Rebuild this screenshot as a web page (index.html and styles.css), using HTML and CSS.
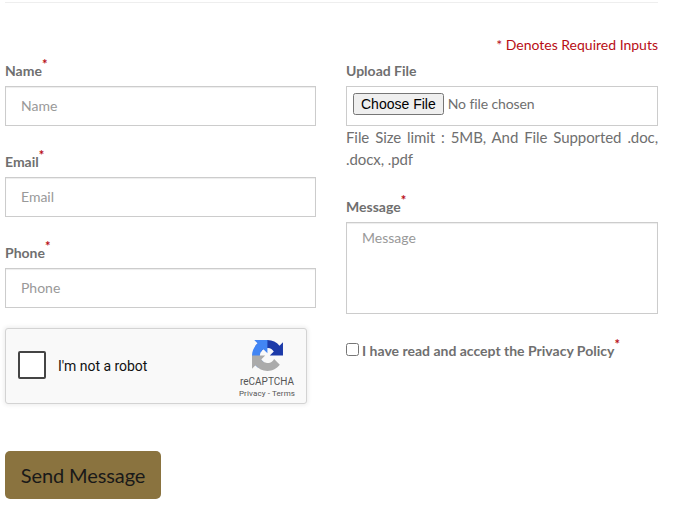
FILE: index.html
```html
<!DOCTYPE html>
<html lang="en">
<head>
<meta charset="utf-8">
<title>Contact form</title>
<link rel="stylesheet" href="styles.css">
</head>
<body>
<form class="contact">
  <p class="required-note">* Denotes Required Inputs</p>
  <div class="columns">
    <div class="column">
      <div class="field">
        <label class="label" for="name">Name<sup class="star">*</sup></label>
        <input class="control" id="name" type="text" placeholder="Name">
      </div>
      <div class="field">
        <label class="label" for="email">Email<sup class="star">*</sup></label>
        <input class="control" id="email" type="email" placeholder="Email">
      </div>
      <div class="field">
        <label class="label" for="phone">Phone<sup class="star">*</sup></label>
        <input class="control" id="phone" type="tel" placeholder="Phone">
      </div>
      <div class="captcha">
        <span class="captcha-box"></span>
        <span class="captcha-text">I'm not a robot</span>
        <div class="captcha-brand">
          <svg class="captcha-logo" viewBox="0 0 64 64" aria-hidden="true">
            <path fill="#1c3aa9" d="M64 31.955l-.033-1.370V4.687l-7.160 7.160C50.948 4.674 42.033.093 32.050.093c-10.400 0-19.622 4.960-25.458 12.640l11.736 11.860a15.550 15.550 0 0 1 4.754-5.334c2.050-1.600 4.952-2.906 8.968-2.906.485 0 .860.057 1.135.163 4.976.393 9.288 3.140 11.828 7.124l-8.307 8.307L64 31.953"/>
            <path fill="#4285f4" d="M31.862.094l-1.370.033H4.594l7.160 7.160C4.580 13.147 0 22.060 0 32.046c0 10.400 4.960 19.622 12.640 25.458L24.500 45.768a15.550 15.550 0 0 1-5.334-4.754c-1.600-2.050-2.906-4.952-2.906-8.968 0-.485.057-.860.163-1.135.393-4.976 3.140-9.288 7.124-11.828l8.307 8.307L31.860.095"/>
            <path fill="#ababab" d="M.001 32.045l.033 1.370v25.898l7.160-7.160c5.860 7.173 14.774 11.754 24.760 11.754 10.400 0 19.622-4.960 25.458-12.640l-11.736-11.860a15.550 15.550 0 0 1-4.754 5.334c-2.050 1.600-4.952 2.906-8.968 2.906-.485 0-.860-.057-1.135-.163-4.976-.393-9.288-3.140-11.828-7.124l8.307-8.307c-10.522.040-22.400.066-27.295-.005"/>
          </svg>
          <span class="captcha-name">reCAPTCHA</span>
          <span class="captcha-links">Privacy - Terms</span>
        </div>
      </div>
    </div>
    <div class="column">
      <div class="upload">
        <label class="label" for="file">Upload File</label>
        <input class="control file" id="file" type="file">
        <p class="hint">File Size limit : 5MB, And File Supported .doc, .docx, .pdf</p>
      </div>
      <div class="message">
        <label class="label" for="message">Message<sup class="star">*</sup></label>
        <textarea class="control area" id="message" placeholder="Message"></textarea>
      </div>
      <label class="consent"><input class="check" type="checkbox">I have read and accept the Privacy Policy<sup class="star">*</sup></label>
    </div>
  </div>
  <button class="send" type="button">Send Message</button>
</form>
</body>
</html>
```
FILE: styles.css
```css
* { box-sizing: border-box; }

body {
  margin: 0;
  background: #fff;
  color: #6f6f6f;
  font-family: Lato, "Liberation Sans", sans-serif;
  font-size: 14px;
}

.contact {
  width: 653px;
  margin: 2px 0 0 5px;
  border-top: 1px solid #eee;
}

.required-note {
  margin: 32px 0 0;
  line-height: 20px;
  text-align: right;
  color: #b80d15;
}

.columns {
  display: grid;
  grid-template-columns: 311px 312px;
  column-gap: 30px;
  margin-top: 6px;
}

.field { height: 91px; }

.label {
  display: block;
  height: 25px;
  line-height: 20px;
  font-weight: 700;
}

.star {
  color: #b80d15;
  font-size: 13px;
  line-height: 0;
  position: relative;
  top: -7px;
  vertical-align: baseline;
}

.control {
  display: block;
  width: 100%;
  height: 40px;
  padding: 5px 15px 7px;
  border: 1px solid #ccc;
  border-radius: 0;
  background: #fff;
  box-shadow: inset 0 1px 1px rgba(0, 0, 0, .075);
  color: #6f6f6f;
  font: 14px/20px Lato, "Liberation Sans", sans-serif;
  outline: 0;
}

.control::placeholder { color: #999; opacity: 1; }

.file { padding: 6px; box-shadow: none; letter-spacing: -.1px; }

.file::file-selector-button {
  font: 14px "Liberation Sans", sans-serif;
  letter-spacing: 0;
}

.hint {
  margin: 0;
  font-size: 15px;
  line-height: 22px;
  text-align: justify;
  letter-spacing: -.08px;
}

.upload { height: 136px; }

.message { height: 144px; }

.area { height: 92px; resize: none; }

.consent {
  display: flex;
  align-items: center;
  height: 20px;
  font-weight: 700;
  line-height: 20px;
}

.check { width: 13px; height: 13px; margin: 0 3px 3px 0; }

.captcha {
  display: flex;
  align-items: center;
  width: 302px;
  height: 76px;
  margin-top: -6px;
  padding: 0 10px 2px 12px;
  border: 1px solid #d3d3d3;
  border-radius: 3px;
  background: #f9f9f9;
  box-shadow: 0 0 4px 1px rgba(0, 0, 0, .08);
  font-family: Roboto, sans-serif;
}

.captcha-box {
  width: 28px;
  height: 28px;
  margin-right: 12px;
  border: 2px solid #444;
  border-radius: 2px;
  background: #fff;
}

.captcha-text {
  padding-top: 2px;
  color: #111;
  font-size: 14px;
  letter-spacing: -.03px;
}

.captcha-brand {
  display: flex;
  flex-direction: column;
  align-items: center;
  width: 58px;
  margin-left: auto;
  padding-top: 9px;
  color: #555;
  white-space: nowrap;
}

.captcha-logo { width: 31px; height: 31px; }

.captcha-name { margin-top: 4px; font-size: 10px; line-height: 13px; }

.captcha-links { font-size: 8px; line-height: 12px; letter-spacing: .12px; }

.send {
  display: block;
  width: 156px;
  height: 48px;
  margin-top: 47px;
  padding: 0;
  border: 0;
  border-radius: 5px;
  background: #8a733f;
  color: #191919;
  font: 20px Lato, "Liberation Sans", sans-serif;
  letter-spacing: -.1px;
}
```
